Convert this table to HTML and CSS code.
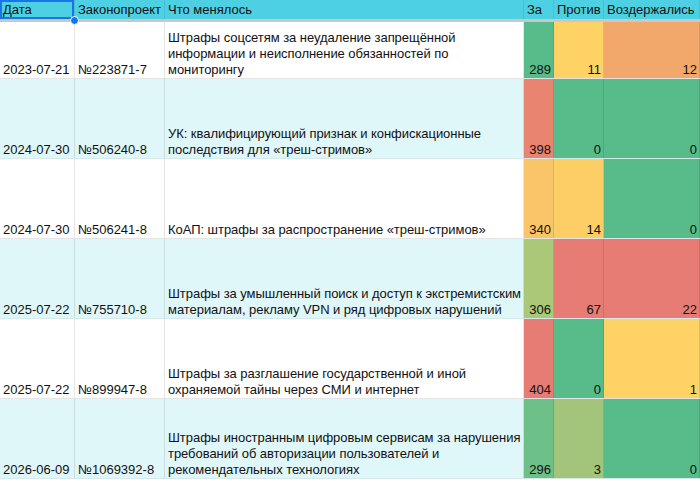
FILE: index.html
```html
<!DOCTYPE html>
<html lang="ru">
<head>
<meta charset="utf-8">
<title>Законопроекты</title>
<link rel="stylesheet" href="styles.css">
</head>
<body>
<div class="sheet">
  <div class="row head">
    <div class="cell sel">Дата<span class="handle"></span></div>
    <div class="cell">Законопроект</div>
    <div class="cell">Что менялось</div>
    <div class="cell">За</div>
    <div class="cell">Против</div>
    <div class="cell">Воздержались</div>
  </div>
  <div class="row r1 white">
    <div class="cell">2023-07-21</div>
    <div class="cell">№223871-7</div>
    <div class="cell text">Штрафы соцсетям за неудаление запрещённой<br>информации и неисполнение обязанностей по<br>мониторингу</div>
    <div class="cell num c-green">289</div>
    <div class="cell num c-yellow">11</div>
    <div class="cell num c-orange">12</div>
  </div>
  <div class="row cyan">
    <div class="cell">2024-07-30</div>
    <div class="cell">№506240-8</div>
    <div class="cell text">УК: квалифицирующий признак и конфискационные<br>последствия для «треш-стримов»</div>
    <div class="cell num c-red2">398</div>
    <div class="cell num c-green">0</div>
    <div class="cell num c-green">0</div>
  </div>
  <div class="row white">
    <div class="cell">2024-07-30</div>
    <div class="cell">№506241-8</div>
    <div class="cell text">КоАП: штрафы за распространение «треш-стримов»</div>
    <div class="cell num c-amber">340</div>
    <div class="cell num c-yellow2">14</div>
    <div class="cell num c-green">0</div>
  </div>
  <div class="row cyan">
    <div class="cell">2025-07-22</div>
    <div class="cell">№755710-8</div>
    <div class="cell text">Штрафы за умышленный поиск и доступ к экстремистским<br>материалам, рекламу VPN и ряд цифровых нарушений</div>
    <div class="cell num c-lime">306</div>
    <div class="cell num c-red">67</div>
    <div class="cell num c-red">22</div>
  </div>
  <div class="row white">
    <div class="cell">2025-07-22</div>
    <div class="cell">№899947-8</div>
    <div class="cell text">Штрафы за разглашение государственной и иной<br>охраняемой тайны через СМИ и интернет</div>
    <div class="cell num c-red">404</div>
    <div class="cell num c-green">0</div>
    <div class="cell num c-yellow">1</div>
  </div>
  <div class="row cyan">
    <div class="cell">2026-06-09</div>
    <div class="cell">№1069392-8</div>
    <div class="cell text">Штрафы иностранным цифровым сервисам за нарушения<br>требований об авторизации пользователей и<br>рекомендательных технологиях</div>
    <div class="cell num c-green2">296</div>
    <div class="cell num c-olive">3</div>
    <div class="cell num c-green">0</div>
  </div>
</div>
</body>
</html>
```

FILE: styles.css
```css
html, body {
  margin: 0;
  padding: 0;
  background: #ffffff;
}

body {
  font-family: "Liberation Sans", Arial, sans-serif;
  font-size: 13px;
  line-height: 16px;
  color: #111111;
  overflow: hidden;
}

.sheet {
  width: 700px;
}

.row {
  display: grid;
  grid-template-columns: 75px 90px 359px 30px 50px 96px;
  height: 80px;
  border-bottom: 1px solid #e3e5e5;
  box-sizing: border-box;
}

.row.head {
  height: 22px;
  background: #4dd0e1;
  border-bottom: 3px solid #c4c9ca;
}

.row.r1 {
  height: 57px;
}

.row.white {
  background: #ffffff;
}

.row.cyan {
  background: #e0f7fa;
  border-bottom-color: #d6e8ea;
}

.cell {
  box-sizing: border-box;
  border-right: 1px solid rgba(0, 0, 0, 0.1);
  padding: 0 1px 0 3px;
  display: flex;
  align-items: flex-end;
  overflow: hidden;
  position: relative;
  white-space: nowrap;
}

.cell.text {
  display: block;
  align-content: end;
  letter-spacing: -0.05px;
}

.row.head .cell {
  border-right-color: rgba(0, 0, 0, 0.07);
  padding-bottom: 1px;
}

.cell.sel {
  box-shadow: inset 0 0 0 2px #1a73e8;
  overflow: visible;
  z-index: 2;
}

.handle {
  position: absolute;
  right: -5px;
  bottom: -6px;
  width: 7px;
  height: 7px;
  border-radius: 50%;
  background: #1a73e8;
  border: 1px solid #ffffff;
}

.cell.num {
  justify-content: flex-end;
  padding-right: 2px;
}

.c-green { background: #57bb8a; }
.c-green2 { background: #6dc087; }
.c-yellow { background: #fed265; }
.c-yellow2 { background: #fdcd66; }
.c-orange { background: #f3a86b; }
.c-red { background: #e67c73; }
.c-red2 { background: #e8846f; }
.c-amber { background: #fac468; }
.c-lime { background: #abc878; }
.c-olive { background: #a2c57b; }
```
